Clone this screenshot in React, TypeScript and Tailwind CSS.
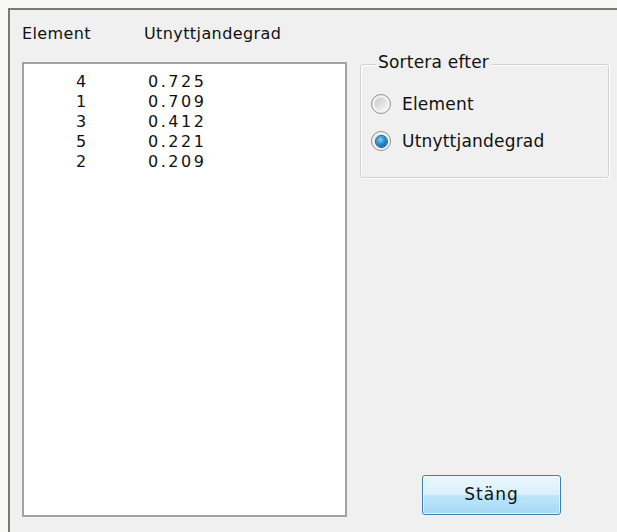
const rows = [
  { id: 4, value: "0.725" },
  { id: 1, value: "0.709" },
  { id: 3, value: "0.412" },
  { id: 5, value: "0.221" },
  { id: 2, value: "0.209" },
];

function Radio({ checked, label }: { checked?: boolean; label: string }) {
  return (
    <div className="flex items-center h-[20px] gap-[11px]">
      <span className="w-[20px] h-[20px] rounded-full border border-[#8f9090] bg-gradient-to-br from-[#d4d4d4] to-[#fdfdfd] flex items-center justify-center shadow-[inset_0_0_0_2px_#f4f4f4]">
        {checked ? (
          <span className="w-[11px] h-[11px] rounded-full bg-[radial-gradient(circle_at_40%_35%,#8fd3ff_0%,#2a8fd2_40%,#0d4f86_100%)] shadow-[0_0_0_1px_#1b5a8c]" />
        ) : (
          <span className="w-[12px] h-[12px] rounded-full bg-gradient-to-br from-[#c9c9c9] to-[#f6f6f6]" />
        )}
      </span>
      <span className="leading-[20px]">{label}</span>
    </div>
  );
}

export default function App() {
  return (
    <div className="w-[617px] h-[532px] bg-[#f8f8f7] pt-[8px] pl-[8px] overflow-hidden text-[16px] text-[#111] font-['DejaVu_Sans',sans-serif]">
      <div className="h-full border-t-2 border-l-2 border-[#797c71] bg-[#f0f0f0] flex gap-[13px] pl-[12px] pt-[14px]">
        {/* results list */}
        <div className="w-[325px] flex flex-col">
          <div className="flex h-[20px] leading-[20px] tracking-[0.4px]">
            <span className="w-[122px]">Element</span>
            <span>Utnyttjandegrad</span>
          </div>
          <div className="mt-[18px] h-[455px] border-2 border-[#a2a2a2] bg-white pt-[8px]">
            {rows.map((r) => (
              <div key={r.id} className="flex h-[20px] leading-[20px]">
                <span className="w-[124px] pl-[52px]">{r.id}</span>
                <span className="tracking-[2.5px]">{r.value}</span>
              </div>
            ))}
          </div>
        </div>

        {/* sort options + close */}
        <div className="w-[249px] flex flex-col pb-[17px] text-[17px] tracking-[0.2px]">
          <div className="relative mt-[40px] h-[114px] rounded-[3px] border border-[#d3d3d3] shadow-[inset_1px_1px_0_#fff,1px_1px_0_#fff] pl-[10px] pt-[29px] flex flex-col gap-[17px]">
            <span className="absolute -top-[13px] left-[15px] px-[2px] bg-[#f0f0f0] leading-[20px]">Sortera efter</span>
            <Radio label="Element" />
            <Radio checked label="Utnyttjandegrad" />
          </div>
          <button className="mt-auto ml-[62px] w-[139px] h-[40px] rounded-[3px] border border-[#3c7fb1] bg-[linear-gradient(#eaf6fd_0%,#d9f0fc_50%,#bee6fd_50%,#a7d9f5_100%)] shadow-[inset_0_0_0_1px_#ffffffb0] tracking-[1px] text-[#111]">
            Stäng
          </button>
        </div>
      </div>
    </div>
  );
}
